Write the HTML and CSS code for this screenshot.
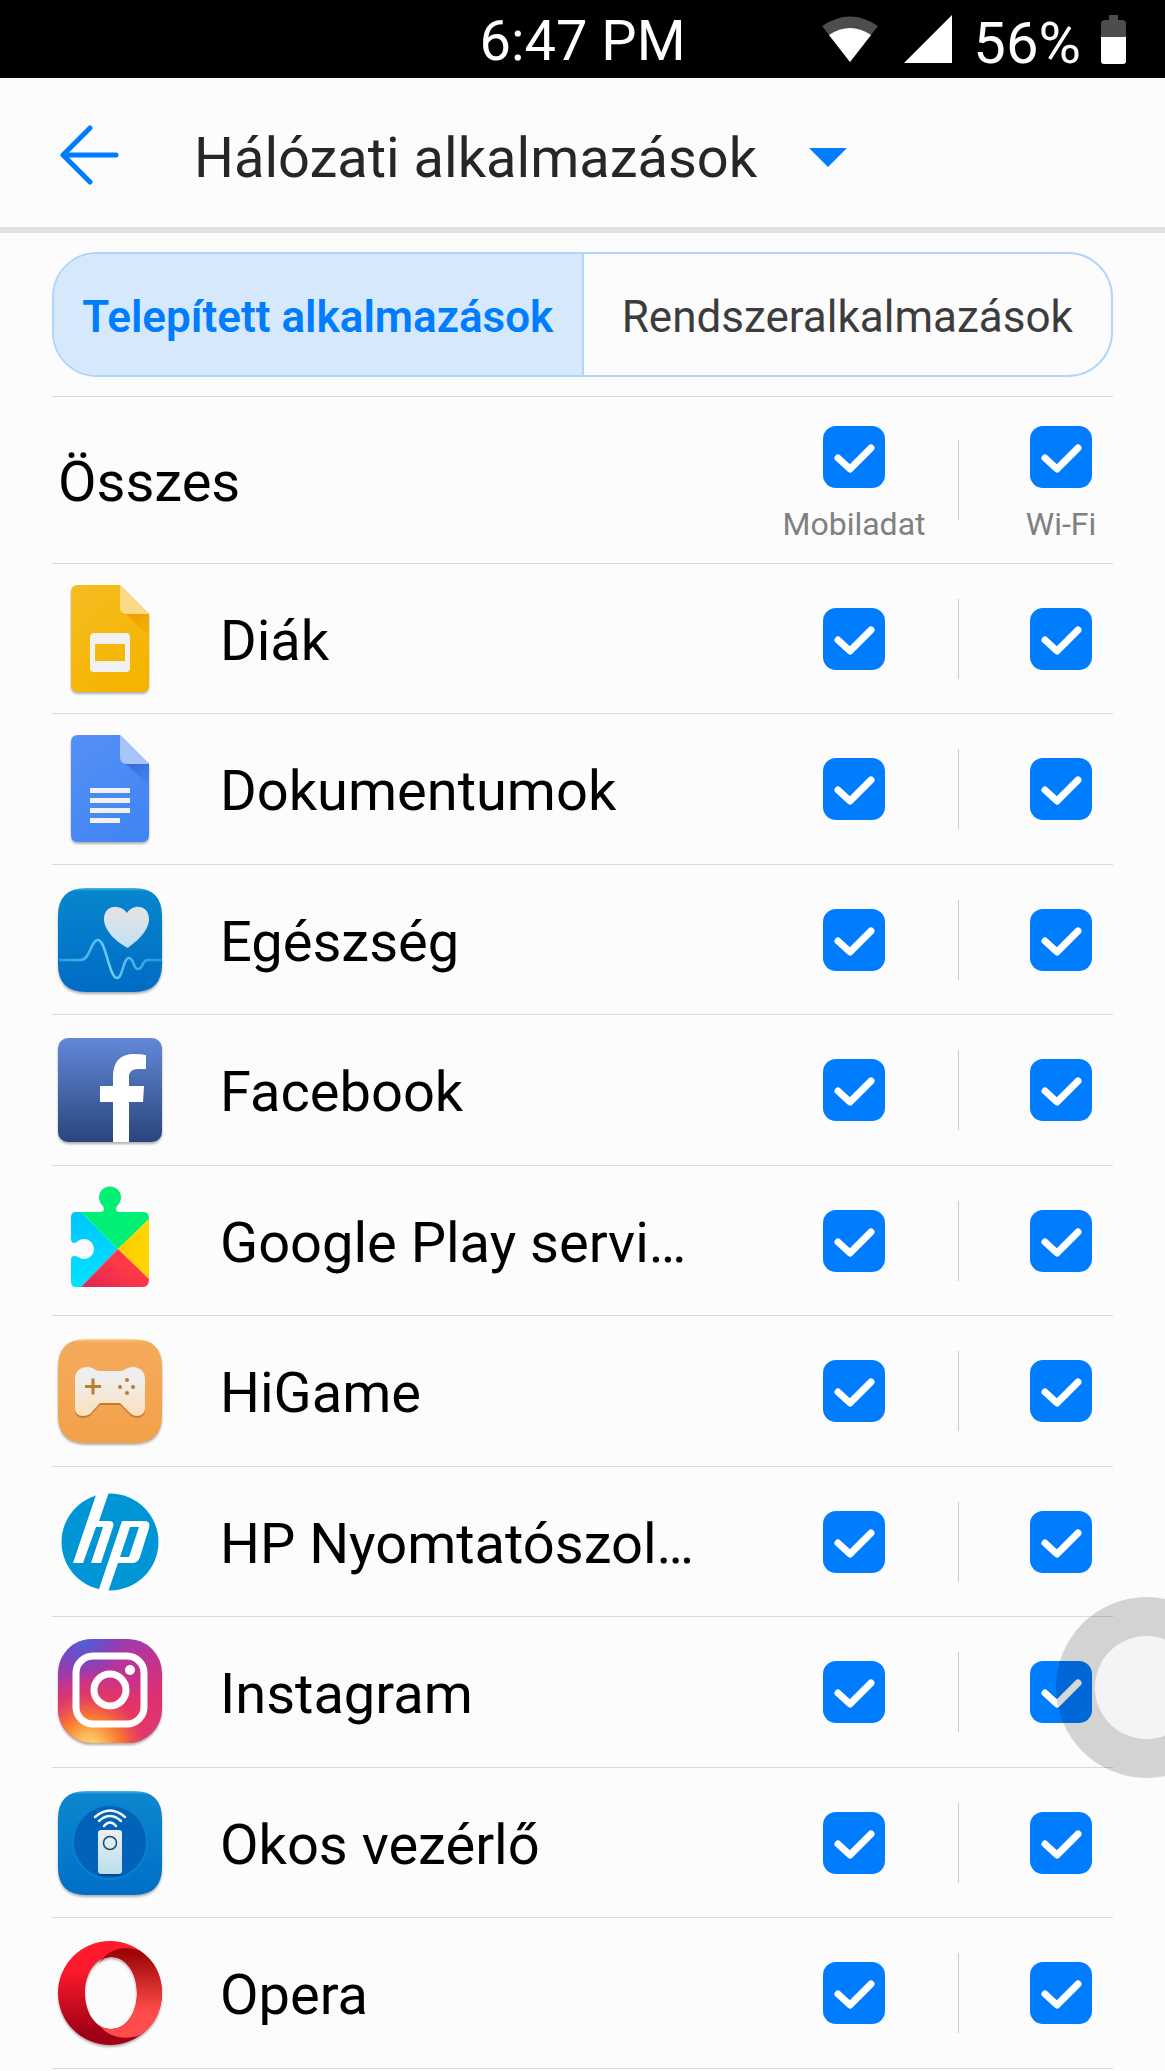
FILE: index.html
```html
<!DOCTYPE html>
<html lang="hu">
<head>
<meta charset="UTF-8" />
<meta name="viewport" content="width=device-width, initial-scale=1" />
<title>Hálózati alkalmazások</title>
<link rel="stylesheet" href="styles.css">
</head>
<body>
<div class="status-bar">
  <span class="time">6:47 PM</span>
  <div class="status-icons">
    <svg class="wifi" width="56" height="46" viewBox="0 0 56 46">
      <path d="M0 10Q28 -9 56 10L28 46Z" fill="#4d4d4d"/>
      <path d="M7 19Q28 5 49 19L28 46Z" fill="#fff"/>
    </svg>
    <svg class="signal" width="48" height="48" viewBox="0 0 48 48"><path d="M48 0V48H0Z" fill="#fff"/></svg>
    <span class="percent">56%</span>
    <svg width="25" height="49" viewBox="0 0 25 49">
      <path d="M8 0H17V5H21Q25 5 25 9V22H0V9Q0 5 4 5H8Z" fill="#4d4d4d"/>
      <path d="M0 22H25V46Q25 49 22 49H3Q0 49 0 46Z" fill="#fff"/>
    </svg>
  </div>
</div>

<header class="header">
  <button class="back" aria-label="Vissza">
    <svg width="60" height="60" viewBox="0 0 60 60" fill="none" stroke="#007dff" stroke-width="5" stroke-linecap="round" stroke-linejoin="round">
      <path d="M31 3L4 30L31 57M4 30H57"/>
    </svg>
  </button>
  <button class="title">
    <span>Hálózati alkalmazások</span>
    <svg width="38" height="19" viewBox="0 0 38 19"><path d="M0 0H38L19 19Z" fill="#007dff"/></svg>
  </button>
</header>

<main>
  <div class="tabs">
    <button class="tab active">Telepített alkalmazások</button>
    <button class="tab">Rendszeralkalmazások</button>
  </div>

  <div class="row all">
    <span class="name">Összes</span>
    <label class="mobile"><input type="checkbox" id="allMobile" checked><span>Mobiladat</span></label>
    <span class="line"></span>
    <label class="wlan"><input type="checkbox" id="allWifi" checked><span>Wi-Fi</span></label>
  </div>

  <ul class="apps">
    <li class="row">
      <svg class="icon" viewBox="0 0 112 112">
        <defs>
          <linearGradient id="slides" x1="0" y1="0" x2="0.6" y2="1"><stop offset="0" stop-color="#f6bd22"/><stop offset="1" stop-color="#f4b400"/></linearGradient>
          <linearGradient id="slidesFold" x1="0" y1="0" x2="0.7" y2="1"><stop offset="0" stop-color="#ec9a05"/><stop offset="1" stop-color="#f4b400"/></linearGradient>
        </defs>
        <path d="M24 2H66L95 31V102Q95 109 88 109H24Q17 109 17 102V9Q17 2 24 2Z" fill="url(#slides)"/>
        <path d="M71 30H95V53Z" fill="url(#slidesFold)"/>
        <path d="M66 2L95 31H73Q66 31 66 24Z" fill="#fada87"/>
        <path fill-rule="evenodd" d="M40 50H72Q76 50 76 54V85Q76 89 72 89H40Q36 89 36 85V54Q36 50 40 50ZM41 61V78H71V61Z" fill="#f1f1f1"/>
      </svg>
      <span class="name">Diák</span>
      <span class="mobile"><input type="checkbox" aria-label="Diák Mobiladat" checked></span>
      <span class="line"></span>
      <span class="wlan"><input type="checkbox" aria-label="Diák Wi-Fi" checked></span>
    </li>
    <li class="row">
      <svg class="icon" viewBox="0 0 112 112">
        <defs>
          <linearGradient id="docs" x1="0" y1="0" x2="0.6" y2="1"><stop offset="0" stop-color="#5591f5"/><stop offset="1" stop-color="#4285f4"/></linearGradient>
          <linearGradient id="docsFold" x1="0" y1="0" x2="0.7" y2="1"><stop offset="0" stop-color="#3769cc"/><stop offset="1" stop-color="#4285f4"/></linearGradient>
        </defs>
        <path d="M24 2H66L95 31V102Q95 109 88 109H24Q17 109 17 102V9Q17 2 24 2Z" fill="url(#docs)"/>
        <path d="M71 30H95V53Z" fill="url(#docsFold)"/>
        <path d="M66 2L95 31H73Q66 31 66 24Z" fill="#a7c5fa"/>
        <path d="M36 55H76V60H36ZM36 65H76V70H36ZM36 75H76V80H36ZM36 85H66V90H36Z" fill="#f1f1f1"/>
      </svg>
      <span class="name">Dokumentumok</span>
      <span class="mobile"><input type="checkbox" aria-label="Dokumentumok Mobiladat" checked></span>
      <span class="line"></span>
      <span class="wlan"><input type="checkbox" aria-label="Dokumentumok Wi-Fi" checked></span>
    </li>
    <li class="row">
      <svg class="icon" viewBox="0 0 112 112">
        <defs>
          <linearGradient id="health" x1="0" y1="0" x2="0" y2="1"><stop offset="0" stop-color="#4cb8ef"/><stop offset="0.03" stop-color="#0786cd"/><stop offset="1" stop-color="#006bc4"/></linearGradient>
          <linearGradient id="heart" x1="0" y1="0" x2="0" y2="1"><stop offset="0.2" stop-color="#dfe3e8"/><stop offset="1" stop-color="#bfe1f4"/></linearGradient>
          <linearGradient id="pulse" x1="0" y1="0" x2="1" y2="0"><stop offset="0" stop-color="#2b9bdb"/><stop offset="0.5" stop-color="#70ccf5"/><stop offset="1" stop-color="#2292d8"/></linearGradient>
        </defs>
        <path d="M32 4H80Q108 4 108 32V80Q108 108 80 108H32Q4 108 4 80V32Q4 4 32 4Z" fill="url(#health)"/>
        <path d="M5 76H27C36 76 37 56 44 56C52 56 55 94 63 94C69 94 69 74 75 74C80 74 79 85 84 85C90 85 87 76 94 76H108" fill="none" stroke="url(#pulse)" stroke-width="2.5"/>
        <path d="M72 63C63 58 50 47 50 35C50 21 66 19 73 29C79 19 95 21 95 35C95 47 82 58 76 62Q74 65 72 63Z" fill="url(#heart)"/>
      </svg>
      <span class="name">Egészség</span>
      <span class="mobile"><input type="checkbox" aria-label="Egészség Mobiladat" checked></span>
      <span class="line"></span>
      <span class="wlan"><input type="checkbox" aria-label="Egészség Wi-Fi" checked></span>
    </li>
    <li class="row">
      <svg class="icon" viewBox="0 0 112 112">
        <defs><linearGradient id="fb" x1="0" y1="0" x2="0" y2="1"><stop offset="0" stop-color="#6288d7"/><stop offset="1" stop-color="#2a457e"/></linearGradient></defs>
        <rect x="4" y="4" width="104" height="104" rx="10" fill="url(#fb)"/>
        <path d="M59 108V68H46V52H59V43Q59 20 80 20Q87 20 92 21V35H84Q75 35 75 43V52H90L89 68H75V108Z" fill="#fff"/>
      </svg>
      <span class="name">Facebook</span>
      <span class="mobile"><input type="checkbox" aria-label="Facebook Mobiladat" checked></span>
      <span class="line"></span>
      <span class="wlan"><input type="checkbox" aria-label="Facebook Wi-Fi" checked></span>
    </li>
    <li class="row">
      <svg class="icon no-shadow" viewBox="0 0 112 112">
        <defs>
          <linearGradient id="playBlue" x1="0" y1="0" x2="0" y2="1"><stop offset="0" stop-color="#00c4ff"/><stop offset="1" stop-color="#00e4ff"/></linearGradient>
          <linearGradient id="playRed" x1="0" y1="1" x2="1" y2="0"><stop offset="0" stop-color="#de2458"/><stop offset="0.6" stop-color="#ff3a44"/></linearGradient>
          <linearGradient id="playYellow" x1="0" y1="0" x2="1" y2="0"><stop offset="0" stop-color="#ffcb00"/><stop offset="1" stop-color="#ffd800"/></linearGradient>
        </defs>
        <path d="M27 27L64 64L27 102H22Q17 102 17 97V75Q17 71 20 71Q22 71 24 72A10 10 0 1 0 24 56Q22 58 20 58Q17 58 17 54V32Q17 27 22 27Z" fill="url(#playBlue)"/>
        <path d="M27 27H46Q50 27 50 24Q50 22 48 20A11 11 0 1 1 64 20Q62 22 62 24Q62 27 66 27H90Q95 27 95 34L64 64Z" fill="#00f076"/>
        <path d="M95 34V94L64 64Z" fill="url(#playYellow)"/>
        <path d="M64 64L95 94Q95 102 89 102H27Z" fill="url(#playRed)"/>
      </svg>
      <span class="name">Google Play servi…</span>
      <span class="mobile"><input type="checkbox" aria-label="Google Play Mobiladat" checked></span>
      <span class="line"></span>
      <span class="wlan"><input type="checkbox" aria-label="Google Play Wi-Fi" checked></span>
    </li>
    <li class="row">
      <svg class="icon" viewBox="0 0 112 112">
        <defs>
          <linearGradient id="game" x1="0" y1="0" x2="0" y2="1"><stop offset="0" stop-color="#ffd583"/><stop offset="0.03" stop-color="#f5aa5c"/><stop offset="1" stop-color="#f2a148"/></linearGradient>
          <linearGradient id="pad" x1="0" y1="0" x2="0" y2="1"><stop offset="0.2" stop-color="#eee"/><stop offset="1" stop-color="#fbe0bd"/></linearGradient>
        </defs>
        <path d="M32 4H80Q108 4 108 32V80Q108 108 80 108H32Q4 108 4 80V32Q4 4 32 4Z" fill="url(#game)"/>
        <path d="M21 73V44C21 32 34 29 42 35Q43 36 45 36H67Q69 36 70 35C78 29 91 32 91 44V73C91 81 83 83 77 79L66 68H46L36 79C29 83 21 81 21 73Z" transform="translate(0 2)" fill="#c47c30"/>
        <path d="M21 73V44C21 32 34 29 42 35Q43 36 45 36H67Q69 36 70 35C78 29 91 32 91 44V73C91 81 83 83 77 79L66 68H46L36 79C29 83 21 81 21 73Z" fill="url(#pad)"/>
        <path d="M31 51.500H47M39 43.500V59.500" stroke="#bd7c34" stroke-width="3"/>
        <g fill="#b97a38"><circle cx="73" cy="45" r="2"/><circle cx="66" cy="52" r="2"/><circle cx="79" cy="52" r="2"/><circle cx="73" cy="58" r="2"/></g>
      </svg>
      <span class="name">HiGame</span>
      <span class="mobile"><input type="checkbox" aria-label="HiGame Mobiladat" checked></span>
      <span class="line"></span>
      <span class="wlan"><input type="checkbox" aria-label="HiGame Wi-Fi" checked></span>
    </li>
    <li class="row">
      <svg class="icon no-shadow" viewBox="0 0 112 112">
        <circle cx="56" cy="56" r="52" fill="#fff"/>
        <circle cx="56" cy="56" r="48.500" fill="#0096d6"/>
        <path d="M43 6H55L45 35H55Q61 35 59 41L47 77H37L49 41H42L29 77H19Z" fill="#fff"/>
        <path fill-rule="evenodd" d="M68 35H90Q97 35 95 42L86 71Q84 77 78 77H64L54 106H44ZM76 41L66 71H75L85 41Z" fill="#fff"/>
      </svg>
      <span class="name">HP Nyomtatószol…</span>
      <span class="mobile"><input type="checkbox" aria-label="HP Mobiladat" checked></span>
      <span class="line"></span>
      <span class="wlan"><input type="checkbox" aria-label="HP Wi-Fi" checked></span>
    </li>
    <li class="row">
      <svg class="icon" viewBox="0 0 112 112">
        <defs>
          <linearGradient id="insta" x1="0.2" y1="0" x2="0.7" y2="1"><stop offset="0" stop-color="#7a44c4"/><stop offset="0.35" stop-color="#b8349c"/><stop offset="0.75" stop-color="#e02f6d"/><stop offset="1" stop-color="#d9367c"/></linearGradient>
          <radialGradient id="instaWarm" cx="0.3" cy="1.05" r="0.75"><stop offset="0" stop-color="#ffd776"/><stop offset="0.15" stop-color="#fdc05c"/><stop offset="0.4" stop-color="#fa7a30"/><stop offset="0.7" stop-color="#e8395f" stop-opacity="0.7"/><stop offset="1" stop-color="#e8395f" stop-opacity="0"/></radialGradient>
          <radialGradient id="instaCool" cx="0.25" cy="0" r="0.4"><stop offset="0" stop-color="#4a64d8"/><stop offset="1" stop-color="#6a48c8" stop-opacity="0"/></radialGradient>
        </defs>
        <rect x="4" y="3" width="104" height="104" rx="34" fill="url(#insta)"/>
        <rect x="4" y="3" width="104" height="104" rx="34" fill="url(#instaWarm)"/>
        <rect x="4" y="3" width="104" height="104" rx="34" fill="url(#instaCool)"/>
        <g fill="none" stroke="#fff" stroke-width="7"><rect x="22" y="20" width="68" height="68" rx="17"/><circle cx="56" cy="54" r="16"/></g>
        <circle cx="76" cy="34" r="5" fill="#fff"/>
      </svg>
      <span class="name">Instagram</span>
      <span class="mobile"><input type="checkbox" aria-label="Instagram Mobiladat" checked></span>
      <span class="line"></span>
      <span class="wlan"><input type="checkbox" aria-label="Instagram Wi-Fi" checked></span>
    </li>
    <li class="row">
      <svg class="icon" viewBox="0 0 112 112">
        <defs>
          <linearGradient id="smart" x1="0" y1="0" x2="0" y2="1"><stop offset="0" stop-color="#4cb8ef"/><stop offset="0.03" stop-color="#0c87ce"/><stop offset="1" stop-color="#006fc8"/></linearGradient>
          <linearGradient id="remote" x1="0" y1="0" x2="0" y2="1"><stop offset="0" stop-color="#eef0f2"/><stop offset="1" stop-color="#b8deec"/></linearGradient>
        </defs>
        <path d="M32 4H80Q108 4 108 32V80Q108 108 80 108H32Q4 108 4 80V32Q4 4 32 4Z" fill="url(#smart)"/>
        <circle cx="56" cy="55" r="37" fill="#0162b8" stroke="#0b80cf" stroke-width="2"/>
        <g fill="none" stroke="#f4f8fb" stroke-width="2.500" stroke-linecap="round"><path d="M41 30Q56 17 71 30M45 34Q56 24 67 34M50 39Q56 32 62 39"/></g>
        <rect x="44" y="44" width="24" height="45" rx="3" fill="#064a8c"/>
        <rect x="44" y="43" width="24" height="44" rx="3" fill="url(#remote)"/>
        <circle cx="56" cy="56" r="6.500" fill="none" stroke="#1d4678" stroke-width="1.500"/>
      </svg>
      <span class="name">Okos vezérlő</span>
      <span class="mobile"><input type="checkbox" aria-label="Okos vezérlő Mobiladat" checked></span>
      <span class="line"></span>
      <span class="wlan"><input type="checkbox" aria-label="Okos vezérlő Wi-Fi" checked></span>
    </li>
    <li class="row">
      <svg class="icon" viewBox="0 0 112 112">
        <defs>
          <linearGradient id="opera" x1="0" y1="0" x2="0" y2="1"><stop offset="0.25" stop-color="#ff1b2d"/><stop offset="0.9" stop-color="#a00014"/></linearGradient>
          <linearGradient id="operaIn" x1="0" y1="0" x2="0" y2="1"><stop offset="0" stop-color="#950000"/><stop offset="0.7" stop-color="#ff4b4b"/></linearGradient>
        </defs>
        <path fill-rule="evenodd" d="M56 4A52 52 0 1 1 56 108A52 52 0 1 1 56 4ZM57 20C42 20 31 36 31 56S42 92 57 92S83 76 83 56S72 20 57 20Z" fill="url(#opera)"/>
        <path d="M45 26C56 10 73 9 86 14C101 23 108 39 108 56S101 89 86 98C73 103 56 102 45 88Q50 92 57 92C72 92 83 76 83 56S72 20 57 20Q50 20 45 26Z" fill="url(#operaIn)"/>
      </svg>
      <span class="name">Opera</span>
      <span class="mobile"><input type="checkbox" aria-label="Opera Mobiladat" checked></span>
      <span class="line"></span>
      <span class="wlan"><input type="checkbox" aria-label="Opera Wi-Fi" checked></span>
    </li>
  </ul>
</main>

<button class="float-ring" aria-label="Menü"></button>

<script>
  // the top row switches the whole column
  function bindAll(id, column) {
    const all = document.getElementById(id)
    const boxes = document.querySelectorAll('.apps .' + column + ' input')
    all.addEventListener('change', () => {
      boxes.forEach(box => box.checked = all.checked)
    })
  }
  bindAll('allMobile', 'mobile')
  bindAll('allWifi', 'wlan')

  const tabs = document.querySelectorAll('.tab')
  tabs.forEach(tab => {
    tab.addEventListener('click', () => {
      tabs.forEach(t => t.classList.remove('active'))
      tab.classList.add('active')
    })
  })
</script>
</body>
</html>
```
FILE: styles.css
```css
* {
  margin: 0;
  padding: 0;
  box-sizing: border-box;
}
body {
  font-family: Roboto, sans-serif;
  font-size: 56px;
  line-height: 66px;
  color: #000;
  background: #fcfcfc;
}
button {
  font: inherit;
  color: inherit;
  background: none;
  border: none;
  cursor: pointer;
}
svg {
  display: block;
  flex-shrink: 0;
}

.status-bar {
  display: grid;
  grid-template-columns: 1fr auto 1fr;
  align-items: center;
  height: 78px;
  padding: 0 39px;
  background: #000;
  color: #fff;
}
.time {
  grid-column: 2;
  padding-top: 4px;
}
.status-icons {
  display: flex;
  align-items: center;
  justify-content: flex-end;
}
.wifi {
  margin-right: 26px;
}
.signal {
  margin-right: 21px;
}
.percent {
  font-size: 58px;
  padding-top: 8px;
  margin-right: 20px;
}

.header {
  display: flex;
  align-items: center;
  height: 155px;
  padding: 4px 0 0 59px;
  border-bottom: 6px solid #e1e1e1;
}
.back {
  margin-right: 75px;
}
.title {
  display: flex;
  align-items: center;
  gap: 52px;
  padding-top: 6px;
  color: #262626;
}

main {
  padding: 19px 52px 0;
}
.tabs {
  display: flex;
  height: 125px;
  margin-bottom: 19px;
  border: 2px solid #b0d5fd;
  border-radius: 45px;
  overflow: hidden;
}
.tab {
  flex: 1 1 0;
  min-width: 0;
  padding-top: 5px;
  font-size: 44px;
  color: #3c3c3c;
  white-space: nowrap;
}
.tab + .tab {
  border-left: 2px solid #b0d5fd;
}
.tab.active {
  color: #007dff;
  background: #d6e8fc;
  font-weight: 600;
}

.apps {
  list-style: none;
}
.row {
  display: flex;
  align-items: center;
  height: 150px;
  border-bottom: 1px solid #d9d9d9;
}
.row:nth-child(even) {
  height: 151px;
}
.row.all {
  height: 168px;
  padding-left: 6px;
  border-top: 1px solid #d9d9d9;
}
.icon {
  width: 112px;
  height: 112px;
  margin: 0 54px 0 2px;
  overflow: visible;
  filter: drop-shadow(0 2px 1px rgba(0, 0, 0, 0.3));
}
.icon.no-shadow {
  filter: none;
}
.name {
  flex: 1;
  min-width: 0;
  padding-top: 4px;
  overflow: hidden;
  text-overflow: ellipsis;
  white-space: nowrap;
}
.mobile, .wlan {
  display: flex;
  flex-direction: column;
  align-items: center;
  gap: 22px;
  width: 144px;
  font-size: 32px;
  line-height: 28px;
  color: #808080;
}
.all .mobile, .all .wlan {
  padding-top: 4px;
}
.wlan {
  width: 104px;
}
.line {
  width: 1px;
  height: 80px;
  margin: 0 50px 0 32px;
  background: #ccc;
}
input[type="checkbox"] {
  appearance: none;
  width: 62px;
  height: 62px;
  border: 3px solid #b3b3b3;
  border-radius: 13px;
  cursor: pointer;
}
input[type="checkbox"]:checked {
  border: none;
  background: #007dff url("data:image/svg+xml,%3Csvg xmlns='http://www.w3.org/2000/svg' viewBox='0 0 62 62'%3E%3Cpath d='M15 32L27 43L48 22' fill='none' stroke='%23fff' stroke-width='7' stroke-linecap='round' stroke-linejoin='round'/%3E%3C/svg%3E") center / cover;
}

/* floating assistive button, half off the right edge */
.float-ring {
  position: fixed;
  right: -72px;
  bottom: 293px;
  width: 181px;
  height: 181px;
  border: 39px solid rgba(0, 0, 0, 0.16);
  border-radius: 50%;
  background: rgba(0, 0, 0, 0.03);
  background-clip: padding-box;
}
```
